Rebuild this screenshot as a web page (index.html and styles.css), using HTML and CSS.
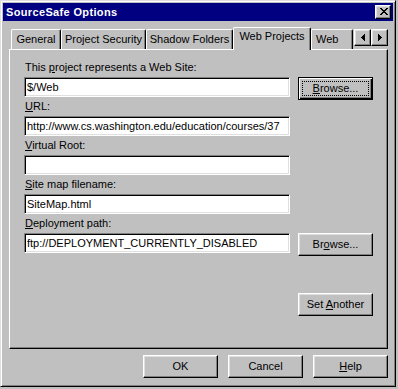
FILE: index.html
```html
<!DOCTYPE html>
<html lang="en">
<head>
  <meta charset="UTF-8" />
  <title>SourceSafe Options</title>
  <link rel="stylesheet" href="styles.css">
</head>
<body>
  <div class="window">
    <div class="titlebar">
      <span class="title">SourceSafe Options</span>
      <button class="close" aria-label="Close">
        <svg width="8" height="7" viewBox="0 0 8 7" shape-rendering="crispEdges">
          <path d="M0 0h2v1h-2zM6 0h2v1h-2zM1 1h2v1h-2zM5 1h2v1h-2zM2 2h4v1h-4zM3 3h2v1h-2zM2 4h4v1h-4zM1 5h2v1h-2zM5 5h2v1h-2zM0 6h2v1h-2zM6 6h2v1h-2z" fill="#000"/>
        </svg>
      </button>
    </div>

    <div class="client">
      <div class="tabrow">
        <div class="tabstrip">
          <div class="tab tab-general">General</div>
          <div class="tab tab-security">Project Security</div>
          <div class="tab tab-shadow">Shadow Folders</div>
          <div class="tab tab-webproj active">Web Projects</div>
          <div class="tab tab-web">Web</div>
        </div>
        <div class="scroller">
          <button class="arrow" aria-label="Previous">
            <svg width="4" height="7" viewBox="0 0 4 7" shape-rendering="crispEdges">
              <path d="M3 0h1v7h-1zM2 1h1v5h-1zM1 2h1v3h-1zM0 3h1v1h-1z" fill="#000"/>
            </svg>
          </button>
          <button class="arrow" aria-label="Next">
            <svg width="4" height="7" viewBox="0 0 4 7" shape-rendering="crispEdges">
              <path d="M0 0h1v7h-1zM1 1h1v5h-1zM2 2h1v3h-1zM3 3h1v1h-1z" fill="#000"/>
            </svg>
          </button>
        </div>
      </div>

      <div class="panel">
        <div class="row">
          <div class="field">
            <label>This <u>p</u>roject represents a Web Site:</label>
            <input class="edit" type="text" value="$/Web">
          </div>
          <button class="btn btn-default side"><span class="focus"><u>B</u>rowse...</span></button>
        </div>

        <div class="row">
          <div class="field">
            <label><u>U</u>RL:</label>
            <input class="edit" type="text" value="http://www.cs.washington.edu/education/courses/37">
          </div>
        </div>

        <div class="row">
          <div class="field">
            <label><u>V</u>irtual Root:</label>
            <input class="edit" type="text" value="">
          </div>
        </div>

        <div class="row">
          <div class="field">
            <label><u>S</u>ite map filename:</label>
            <input class="edit" type="text" value="SiteMap.html">
          </div>
        </div>

        <div class="row">
          <div class="field">
            <label><u>D</u>eployment path:</label>
            <input class="edit" type="text" value="ftp://DEPLOYMENT_CURRENTLY_DISABLED">
          </div>
          <button class="btn side">Br<u>o</u>wse...</button>
        </div>

        <div class="panel-footer">
          <button class="btn">Set <u>A</u>nother</button>
        </div>
      </div>

      <div class="actions">
        <button class="btn">OK</button>
        <button class="btn">Cancel</button>
        <button class="btn"><u>H</u>elp</button>
      </div>
    </div>
  </div>
</body>
</html>
```

FILE: styles.css
```css
* {
  margin: 0;
  padding: 0;
  box-sizing: border-box;
}

body {
  background: #c0c0c0;
  font-family: "Liberation Sans", Arial, sans-serif;
  font-size: 11px;
  color: #000;
}

.window {
  width: 396px;
  height: 387px;
  background: #c0c0c0;
  border: 1px solid;
  border-color: #dfdfdf #000 #000 #dfdfdf;
  box-shadow: inset 1px 1px #fff, inset -1px -1px #808080;
  padding: 2px;
}

/* title bar */
.titlebar {
  height: 18px;
  background: #000080;
  color: #fff;
  display: flex;
  align-items: center;
  justify-content: space-between;
  padding: 0 2px 0 3px;
}

.title {
  font-weight: bold;
  font-size: 11px;
  line-height: 13px;
  letter-spacing: 0.35px;
}

.close {
  width: 16px;
  height: 14px;
  background: #c0c0c0;
  border: 1px solid;
  border-color: #fff #000 #000 #fff;
  box-shadow: inset -1px -1px #808080, inset 1px 1px #dfdfdf;
  display: flex;
  align-items: center;
  justify-content: center;
  padding: 0 0 1px 1px;
}

.close svg {
  display: block;
}

.client {
  padding: 6px 5px 0 6px;
}

/* tabs */
.tabrow {
  display: flex;
  height: 22px;
  position: relative;
  z-index: 1;
}

.tabstrip {
  display: flex;
  align-items: flex-end;
  width: 345px;
  padding-left: 2px;
}

.tab {
  height: 20px;
  border: 1px solid;
  border-color: #fff #000 transparent #fff;
  border-bottom: none;
  border-radius: 2px 2px 0 0;
  box-shadow: inset -1px 0 #808080;
  background: #c0c0c0;
  text-align: center;
  line-height: 13px;
  padding-top: 3px;
  white-space: nowrap;
}

.tab.active {
  height: 23px;
  margin-bottom: -1px;
  padding-top: 2px;
}

.tab-general { width: 50px; }
.tab-security { width: 85px; }
.tab-shadow { width: 87px; }
.tab-webproj { width: 78px; }
.tab-web { width: 42px; text-align: left; padding-left: 4px; }

.scroller {
  display: flex;
  align-self: flex-start;
  margin-top: 2px;
}

.arrow {
  width: 17px;
  height: 17px;
  background: #c0c0c0;
  border: 1px solid;
  border-color: #fff #000 #000 #fff;
  box-shadow: inset -1px -1px #808080, inset 1px 1px #dfdfdf;
  display: flex;
  align-items: center;
  justify-content: center;
}

.arrow svg {
  display: block;
}

/* tab page */
.panel {
  width: 379px;
  height: 300px;
  border: 1px solid;
  border-color: #fff #000 #000 #fff;
  box-shadow: inset -1px -1px #808080;
  padding: 8px 14px 0 14px;
}

.row {
  display: flex;
  gap: 8px;
}

.field {
  width: 266px;
}

.field label {
  display: block;
  line-height: 13px;
  padding: 3px 0 3px 1px;
  white-space: nowrap;
}

.edit {
  display: block;
  width: 266px;
  height: 20px;
  border: 1px solid;
  border-color: #808080 #fff #fff #808080;
  box-shadow: inset 1px 1px #000, inset -1px -1px #dfdfdf;
  background: #fff;
  font-family: inherit;
  font-size: 11px;
  color: #000;
  padding: 0 2px;
  outline: none;
}

/* buttons */
.btn {
  width: 75px;
  height: 23px;
  background: #c0c0c0;
  border: 1px solid;
  border-color: #fff #000 #000 #fff;
  box-shadow: inset -1px -1px #808080, inset 1px 1px #dfdfdf;
  font-family: inherit;
  font-size: 11px;
  color: #000;
  line-height: 13px;
}

.btn-default {
  border-color: #000;
  box-shadow: inset 1px 1px #fff, inset -1px -1px #000, inset -2px -2px #808080;
}

.focus {
  display: block;
  margin: 0 3px;
  border: 1px dotted #000;
  line-height: 13px;
}

.side {
  margin-top: 19px;
  margin-bottom: -3px;
}

.panel-footer {
  display: flex;
  justify-content: flex-end;
  margin-top: 40px;
}

.actions {
  display: flex;
  justify-content: flex-end;
  gap: 10px;
  margin-top: 6px;
}
```
